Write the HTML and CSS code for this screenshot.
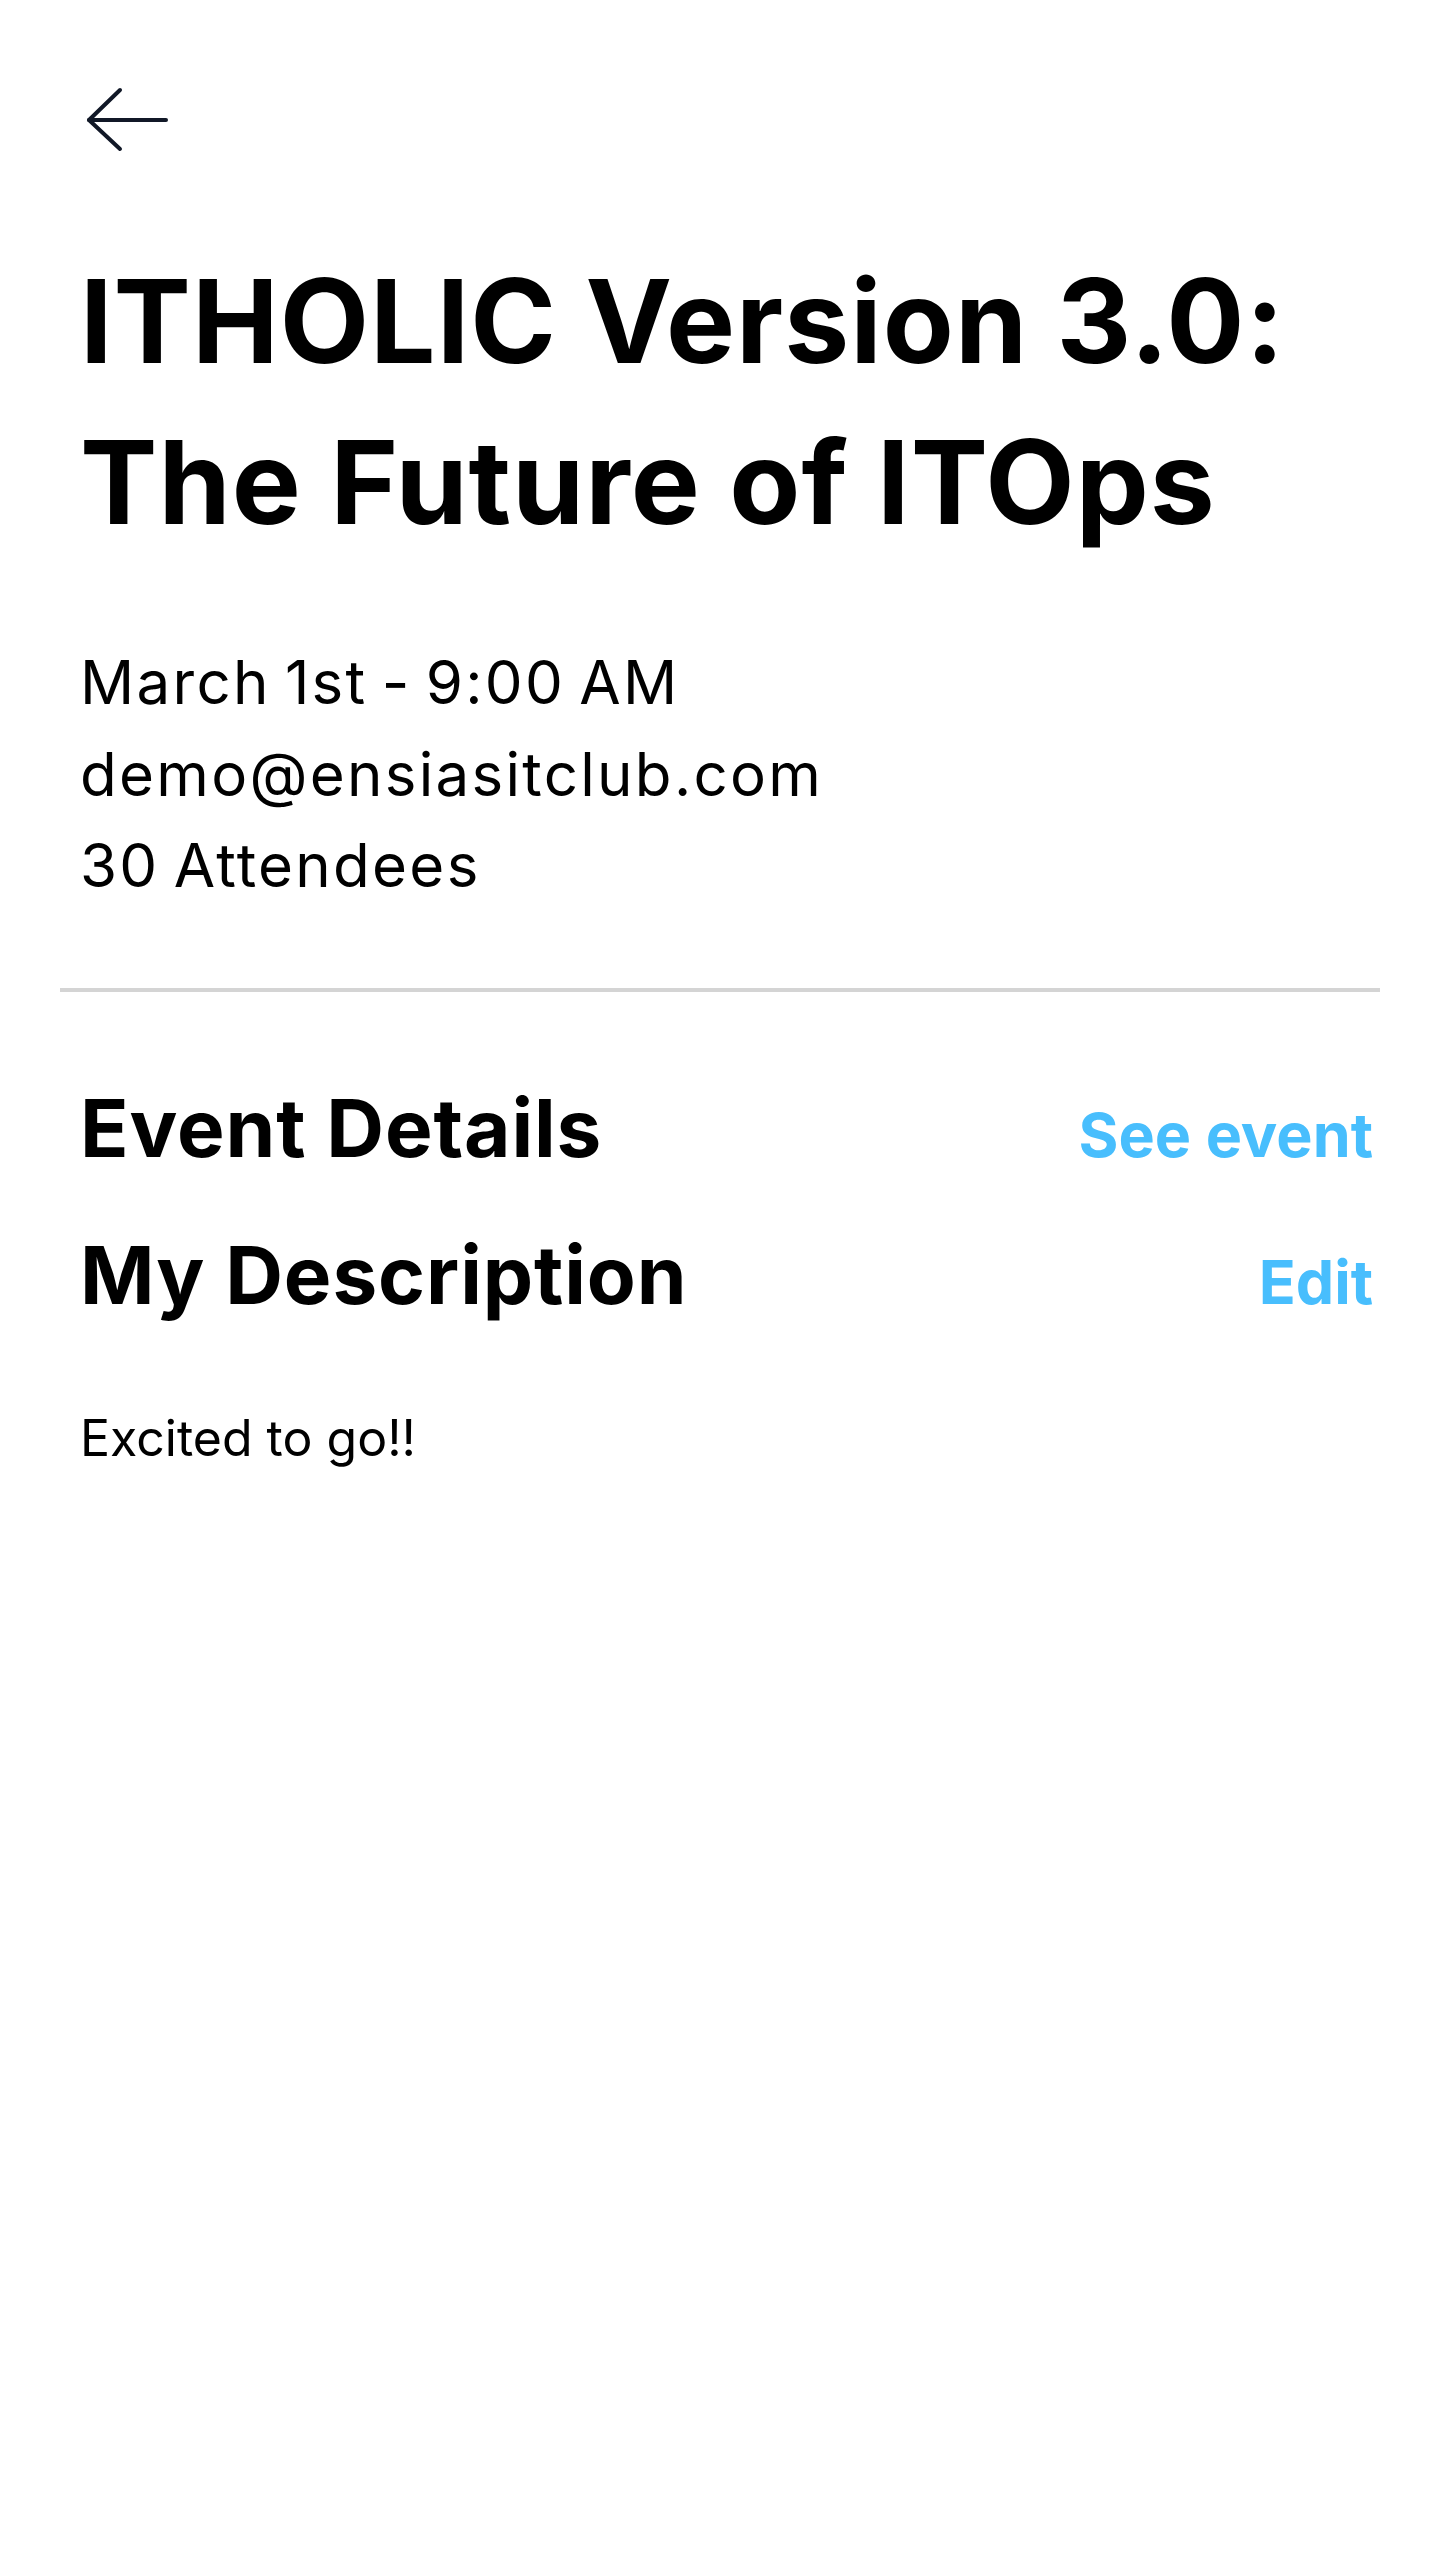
FILE: index.html
```html
<!DOCTYPE html>
<html lang="en">
<head>
<meta charset="utf-8">
<title>ITHOLIC Version 3.0: The Future of ITOps</title>
<link rel="stylesheet" href="styles.css">
</head>
<body>
<main class="page">
  <header class="topbar">
    <a class="back" href="#" aria-label="Back">
      <svg class="back-icon" width="84" height="66" viewBox="0 0 84 66" fill="none" stroke="#111827" stroke-width="4" stroke-linecap="round" stroke-linejoin="round">
        <path d="M3 33 L80 33"/>
        <path d="M34 3 L3 33 L34 62"/>
      </svg>
    </a>
  </header>

  <section class="content">
    <h1 class="title">ITHOLIC Version 3.0:<br>The Future of ITOps</h1>
    <div class="meta">
      <p class="meta-line">March 1st - 9:00 AM</p>
      <p class="meta-line">demo@ensiasitclub.com</p>
      <p class="meta-line">30 Attendees</p>
    </div>
  </section>

  <hr class="divider">

  <section class="content details">
    <div class="row">
      <h2 class="row-title">Event Details</h2>
      <a class="row-link" href="#">See event</a>
    </div>
    <div class="row">
      <h2 class="row-title">My Description</h2>
      <a class="row-link" href="#">Edit</a>
    </div>
    <p class="description">Excited to go!!</p>
  </section>
</main>
</body>
</html>
```
FILE: styles.css
```css
* { box-sizing: border-box; }

html, body {
  margin: 0;
  padding: 0;
  background: #ffffff;
}

body {
  font-family: "Inter", "Noto Sans", "Liberation Sans", sans-serif;
  color: #000000;
}

.page {
  width: 1440px;
  min-height: 2560px;
  padding: 0 60px;
}

.topbar {
  padding: 87px 0 0 26px;
  height: 153px;
}

.back {
  display: block;
  width: 84px;
  height: 66px;
}

.back-icon {
  display: block;
}

.content {
  padding: 0 7px 0 20px;
}

.title {
  margin: 88px 0 0;
  font-size: 116px;
  font-weight: 700;
  line-height: 161px;
  letter-spacing: 1px;
}

.meta {
  margin-top: 74px;
}

.meta-line {
  margin: 0;
  font-size: 60px;
  font-weight: 400;
  line-height: 91.5px;
  letter-spacing: 2.3px;
  word-spacing: -5px;
}

.divider {
  margin: 76px 0 0;
  height: 4px;
  border: 0;
  background: #d4d4d4;
}

.details {
  padding-top: 88px;
}

.row {
  display: flex;
  justify-content: space-between;
  align-items: baseline;
}

.row + .row {
  margin-top: 51px;
}

.row-title {
  margin: 0;
  font-size: 80px;
  font-weight: 700;
  line-height: 96px;
  letter-spacing: 0.9px;
}

.row-link {
  font-size: 61px;
  font-weight: 700;
  color: #48befd;
  text-decoration: none;
}

.description {
  margin: 78px 0 0;
  font-size: 50px;
  line-height: 75px;
  letter-spacing: 0;
}
```
